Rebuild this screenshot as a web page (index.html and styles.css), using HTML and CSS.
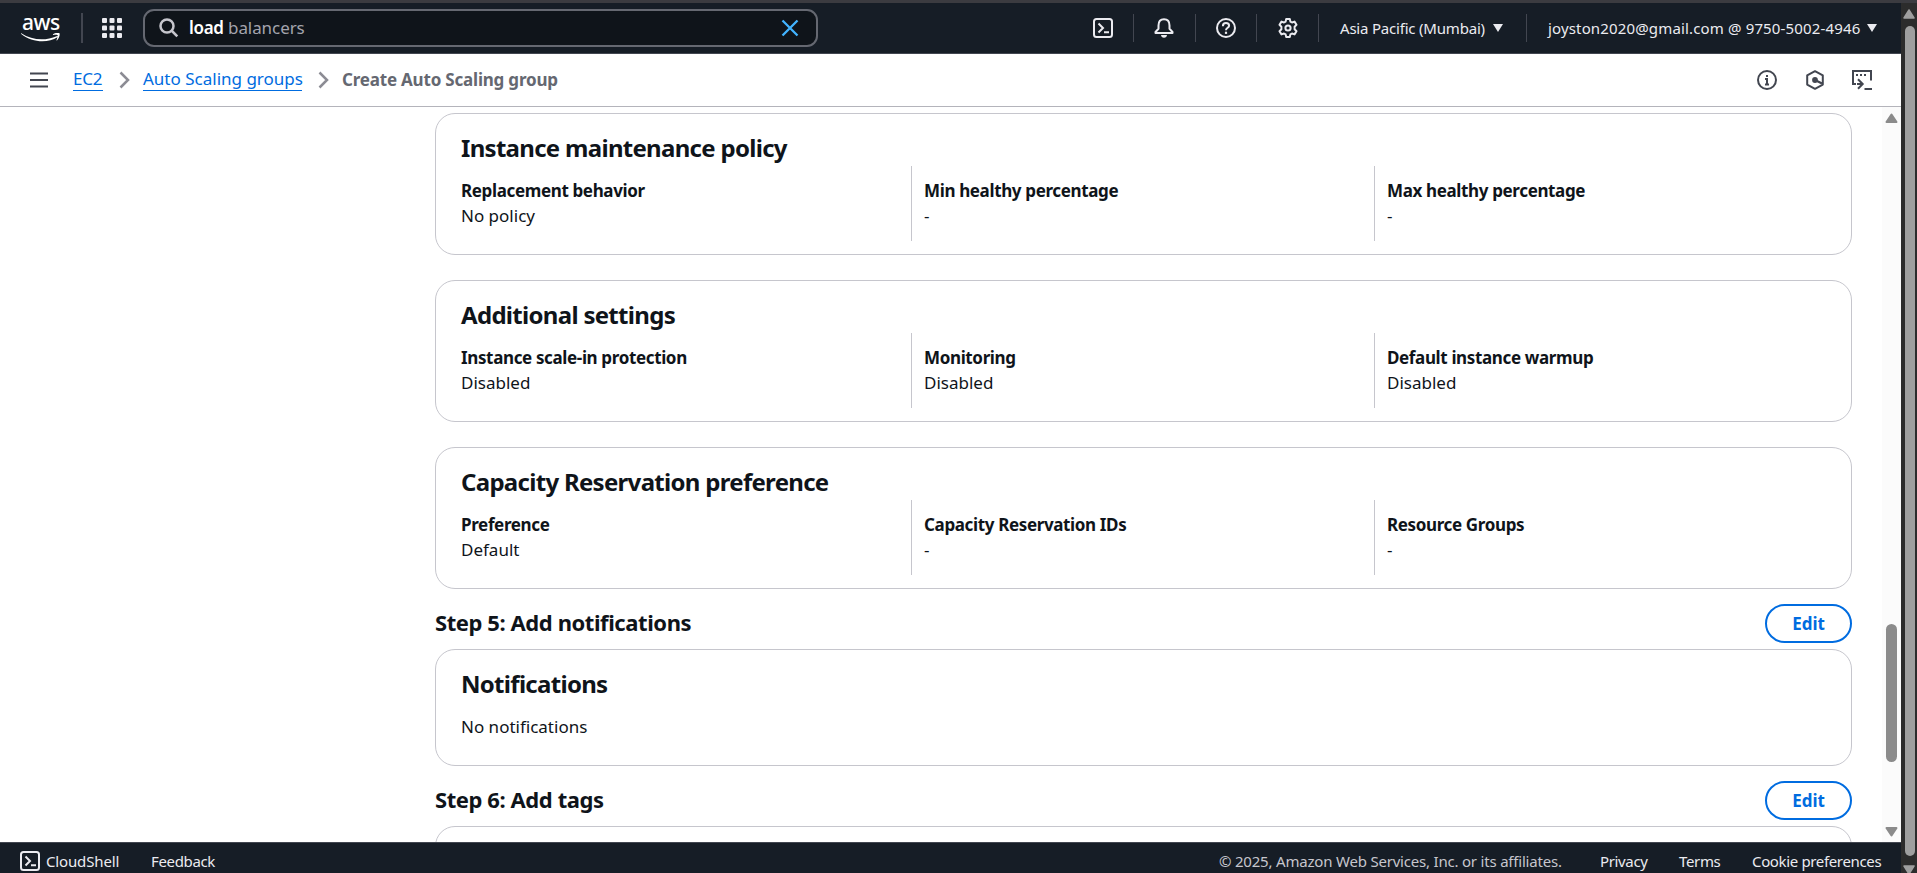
FILE: index.html
```
<!DOCTYPE html>
<html lang="en">
<head>
<meta charset="utf-8">
<title>Create Auto Scaling group | EC2</title>
<link rel="stylesheet" href="styles.css">
</head>
<body>
<div class="top-strip"></div>
<div class="window">
  <div class="app">
    <header class="nav">
      <a class="logo"><span class="logo-text">aws</span><svg width="40" height="11" viewBox="0 17 40 11"><path d="M0.3 17.3C11 24.600 25 25 35.600 20.200c.9-.4 1.600.5.8 1.100C27 27.300 11 26.800.2 18c-.4-.4-.2-.9.100-.7zM32 18.200c2-1.500 5.500-1.800 6.400-1 .8.900-.1 5-2.200 7-.5.400-.8.200-.6-.400.5-1.300 1.500-4 1-4.600-.6-.7-3.200-.4-4.300-.3-.4 0-.6-.4-.3-.7z" fill="#fff"/></svg></a>
      <span class="nav-rule"></span>
      <a class="apps"><svg width="20" height="20" fill="#ebebf0"><rect width="5" height="5" rx="1"/><rect x="7.500" width="5" height="5" rx="1"/><rect x="15" width="5" height="5" rx="1"/><rect y="7.500" width="5" height="5" rx="1"/><rect x="7.500" y="7.500" width="5" height="5" rx="1"/><rect x="15" y="7.500" width="5" height="5" rx="1"/><rect y="15" width="5" height="5" rx="1"/><rect x="7.500" y="15" width="5" height="5" rx="1"/><rect x="15" y="15" width="5" height="5" rx="1"/></svg></a>
      <div class="search">
        <svg width="20" height="20" fill="none" stroke="#c6c6cd" stroke-width="2.500"><circle cx="8" cy="8" r="6.500"/><path d="M12.500 12.500l5.800 5.800"/></svg>
        <span class="query"><b>load</b> balancers</span>
        <svg class="clear" width="18" height="18" fill="none" stroke="#42b4ff" stroke-width="2.300"><path d="M1.500 1.500l15 15M16.500 1.500l-15 15"/></svg>
      </div>
      <div class="tools">
        <a class="tool"><svg width="20" height="20" fill="none" stroke="#ebebf0" stroke-width="2"><rect x="1" y="1" width="18" height="18" rx="2.500"/><path d="M5.500 5.500L10 10l-4.500 4.500M11 14.200h5"/></svg></a>
        <a class="tool"><svg width="20" height="20" fill="none" stroke="#ebebf0" stroke-width="2" stroke-linejoin="round"><path d="M4.500 7.500C4.500 3.500 6.500 1.200 10 1.200s5.500 2.300 5.500 6.300v3.300l3 3.200v1h-17v-1l3-3.200z"/><path d="M7 17h6c0 1.500-1.300 2.800-3 2.800S7 18.500 7 17z" fill="#ebebf0" stroke="none"/></svg></a>
        <a class="tool"><svg width="20" height="20" fill="none" stroke="#ebebf0" stroke-width="2"><circle cx="10" cy="10" r="9"/><path d="M6.900 8.200C6.900 6 8.200 5 10 5s3.100 1 3.100 2.700c0 2.100-3.100 2-3.100 4.500"/><path d="M10 13.700v2.200" stroke-width="2.200"/></svg></a>
        <a class="tool"><svg width="20" height="20" fill="none" stroke="#ebebf0" stroke-width="2" stroke-linejoin="round"><path d="M8.200 1h3.600l.6 2.600 1.600.9 2.500-.9 2 3.200-1.900 1.900v2.600l1.900 1.900-2 3.200-2.500-.9-1.600.9-.6 2.600H8.200l-.6-2.600-1.600-.9-2.500.9-2-3.200 1.900-1.900V8.700L1.500 6.800l2-3.200 2.500.9 1.600-.9z"/><circle cx="10" cy="10" r="2.600"/></svg></a>
        <a class="region"><span class="region-name">Asia Pacific (Mumbai)</span><i class="caret"></i></a>
        <a class="account"><span class="account-name">joyston2020@gmail.com @ 9750-5002-4946</span><i class="caret"></i></a>
      </div>
    </header>

    <nav class="crumbs">
      <svg class="menu" width="18" height="16" stroke="#424650" stroke-width="2"><path d="M0 1.500h18M0 8h18M0 14.500h18"/></svg>
      <a class="crumb ec2">EC2</a>
      <svg class="chev" width="12" height="18" fill="none" stroke="#8c8c94" stroke-width="2.500"><path d="M1.500 1.500L9 9l-7.500 7.500"/></svg>
      <a class="crumb asg">Auto Scaling groups</a>
      <svg class="chev" width="12" height="18" fill="none" stroke="#8c8c94" stroke-width="2.500"><path d="M1.500 1.500L9 9l-7.500 7.500"/></svg>
      <span class="current">Create Auto Scaling group</span>
      <div class="panel-icons">
        <svg width="20" height="20" fill="none" stroke="#424650" stroke-width="2"><circle cx="10" cy="10" r="9"/><path d="M8 9h2v5.500M8 14.500h4M9 6h2"/></svg>
        <svg width="18" height="20" fill="none" stroke="#424650" stroke-width="2"><path d="M9 1.200l7.800 4.200v9.200L9 18.800l-7.800-4.200V5.400z" stroke-linejoin="round"/><circle cx="9" cy="10" r="2.900" fill="#424650" stroke="none"/><path d="M9 10l7 3.500" stroke-width="2.300"/></svg>
        <svg width="20" height="20" fill="none" stroke="#424650" stroke-width="2"><path d="M4 14H1V1h18v9.500M5 14h5.500M6 9.200l4.700 4.800L6 18.700M12.500 19H20"/><path d="M4 5h2M8 5h2M12 5h2"/></svg>
      </div>
    </nav>

    <div class="body">
      <main class="content">
        <section class="card">
          <h2>Instance maintenance policy</h2>
          <dl class="cols">
            <div><dt>Replacement behavior</dt><dd>No policy</dd></div>
            <div><dt>Min healthy percentage</dt><dd>-</dd></div>
            <div><dt>Max healthy percentage</dt><dd>-</dd></div>
          </dl>
        </section>
        <section class="card">
          <h2>Additional settings</h2>
          <dl class="cols">
            <div><dt>Instance scale-in protection</dt><dd>Disabled</dd></div>
            <div><dt>Monitoring</dt><dd>Disabled</dd></div>
            <div><dt>Default instance warmup</dt><dd>Disabled</dd></div>
          </dl>
        </section>
        <section class="card">
          <h2>Capacity Reservation preference</h2>
          <dl class="cols">
            <div><dt>Preference</dt><dd>Default</dd></div>
            <div><dt>Capacity Reservation IDs</dt><dd>-</dd></div>
            <div><dt>Resource Groups</dt><dd>-</dd></div>
          </dl>
        </section>
        <div class="step"><h3>Step 5: Add notifications</h3><button class="edit">Edit</button></div>
        <section class="card short">
          <h2>Notifications</h2>
          <p>No notifications</p>
        </section>
        <div class="step"><h3>Step 6: Add tags</h3><button class="edit">Edit</button></div>
        <section class="card last"></section>
      </main>
      <div class="scroll">
        <svg width="13" height="10" fill="#8b8b8b" stroke="#8b8b8b" stroke-width="2" stroke-linejoin="round"><path d="M6.500 1.500L11.500 9h-10z"/></svg>
        <i class="thumb"></i>
        <svg width="13" height="10" fill="#8b8b8b" stroke="#8b8b8b" stroke-width="2" stroke-linejoin="round"><path d="M6.500 8.500L11.500 1h-10z"/></svg>
      </div>
    </div>

    <footer class="foot">
      <svg width="20" height="20" fill="none" stroke="#ebebf0" stroke-width="2"><rect x="1" y="1" width="18" height="18" rx="2.500"/><path d="M5.500 5.500L10 10l-4.500 4.500M11 14.200h5"/></svg>
      <a class="shell">CloudShell</a>
      <a class="feedback">Feedback</a>
      <span class="copy">© 2025, Amazon Web Services, Inc. or its affiliates.</span>
      <a class="privacy">Privacy</a>
      <a class="terms">Terms</a>
      <a class="cookie">Cookie preferences</a>
    </footer>
  </div>
  <div class="outer-scroll">
    <svg width="12" height="10" fill="#9f9f9f" stroke="#9f9f9f" stroke-width="1.500" stroke-linejoin="round"><path d="M6 1L11 9H1z"/></svg>
    <i class="outer-thumb"></i>
    <svg width="12" height="10" fill="#9f9f9f" stroke="#9f9f9f" stroke-width="1.500" stroke-linejoin="round"><path d="M6 9L11 1H1z"/></svg>
  </div>
</div>
</body>
</html>
```
FILE: styles.css
```
* { box-sizing: border-box; margin: 0; padding: 0; }
html, body { height: 100%; overflow: hidden; }
body {
  font-family: "Noto Sans", "Open Sans", sans-serif;
  font-size: 17px;
  line-height: 25px;
  color: #0f141a;
  background: #fff;
  white-space: nowrap;
}
svg { display: block; flex: none; }
.top-strip { height: 3px; background: #3b3b40; }
.window { display: flex; height: 870px; }
.app { display: flex; flex-direction: column; width: 1901px; }

/* Global navigation */
.nav {
  display: flex;
  align-items: center;
  height: 51px;
  flex: none;
  background: #161d26;
  border-bottom: 1px solid #424650;
  color: #ebebf0;
}
.logo { display: flex; flex-direction: column; width: 60px; margin: -4px 0 0 21px; }
.logo-text {
  margin-bottom: -2px;
  padding-left: 1px;
  font: 500 21px/26px "Noto Sans", sans-serif;
  letter-spacing: -0.5px;
  color: #fff;
}
.nav-rule { width: 2px; height: 30px; background: #424650; }
.apps { margin: 0 21px 0 19px; }
.search {
  display: flex;
  align-items: center;
  width: 675px;
  height: 38px;
  padding: 0 17px 0 14px;
  border: 2px solid #656871;
  border-radius: 11px;
  background: #0f141a;
}
.query { margin: -2px 0 0 10px; color: #a4a4ad; letter-spacing: -0.08px; }
.query b { color: #fff; font-weight: 600; letter-spacing: -0.3px; }
.clear { margin-left: auto; }
.tools { display: flex; align-items: center; height: 28px; margin-left: auto; font-size: 15px; }
.tool {
  display: flex;
  align-items: center;
  justify-content: center;
  width: 61.700px;
  height: 28px;
  border-right: 1px solid #424650;
}
.region { display: flex; align-items: center; width: 208px; height: 28px; padding-left: 21px; border-right: 1px solid #424650; }
.region-name { width: 153px; letter-spacing: -0.2px; }
.account { display: flex; align-items: center; width: 374px; padding-left: 21px; }
.account-name { width: 319px; letter-spacing: 0.15px; }
.caret { border: 5px solid transparent; border-top: 8px solid #ebebf0; border-bottom: 0; }

/* Breadcrumb bar */
.crumbs {
  display: flex;
  align-items: center;
  height: 53px;
  flex: none;
  padding: 0 29px 0 30px;
  border-bottom: 1px solid #b4b4bb;
}
.crumb { color: #006ce0; height: 25px; line-height: 22px; position: relative; }
.crumb::after { content: ""; position: absolute; left: 0; right: 0; bottom: 2px; height: 1px; background: #006ce0; }
.ec2 { width: 30px; margin-left: 25px; letter-spacing: -0.2px; }
.asg { width: 159px; }
.chev { margin: 0 12px 0 16px; }
.current { margin-top: -2px; color: #656871; font-weight: 700; letter-spacing: -0.2px; }
.panel-icons { display: flex; gap: 29px; margin-left: auto; }
.panel-icons svg:not(:last-child) { margin: 0 -1px 0 1px; }

/* Review content */
.body { display: flex; flex: 1; min-height: 0; overflow: hidden; }
.content { width: 1417px; margin-left: 435px; padding-top: 6px; }
.card {
  height: 142px;
  margin-bottom: 25px;
  padding: 19px 25px 0;
  border: 1px solid #c6c6cd;
  border-radius: 20px;
}
h2 { font-size: 24px; line-height: 30px; font-weight: 700; letter-spacing: -0.7px; }
.cols { display: grid; grid-template-columns: repeat(3, 463px); height: 75px; margin: 3px -12px 0 -13px; }
.cols > div { padding: 12px 0 0 12px; border-left: 1px solid #c6c6cd; }
.cols > div:first-child { border-left-color: transparent; }
dt { font-weight: 700; letter-spacing: -0.36px; }
.step { display: flex; align-items: center; justify-content: space-between; height: 39px; margin: -10px 0 6px; }
h3 { margin-top: -3px; font-size: 22px; line-height: 28px; font-weight: 700; letter-spacing: -0.42px; }
.edit {
  width: 87px;
  height: 39px;
  border: 2px solid #006ce0;
  border-radius: 20px;
  background: #fff;
  color: #006ce0;
  font: 700 17px/25px "Noto Sans", sans-serif;
}
.short { height: 117px; }
.short p { margin-top: 15px; }

/* Scrollbars */
.scroll { display: flex; flex-direction: column; align-items: center; width: 19px; margin-left: auto; padding: 6px 0 5px; background: #fbfbfb; }
.thumb { width: 11px; height: 138px; margin: 501px 0 auto; border-radius: 6px; background: #8b8b8b; }
.outer-scroll { display: flex; flex-direction: column; align-items: center; width: 16px; padding-top: 6px; background: #2c2c2c; }
.outer-thumb { width: 10px; height: 830px; margin: 7px 0 9px 1px; border-radius: 5px; background: #9f9f9f; flex: none; }

/* Footer */
.foot {
  display: flex;
  align-items: flex-start;
  height: 31px;
  flex: none;
  padding: 8px 20px 0;
  background: #161d26;
  border-top: 1px solid #424650;
  color: #ebebf0;
  font-size: 15px;
  line-height: 20px;
  letter-spacing: -0.35px;
}
.shell { margin-left: 6px; width: 105px; letter-spacing: -0.15px; }
.copy { margin-left: auto; width: 381px; color: #c6c6cd; letter-spacing: -0.2px; }
.privacy { width: 79px; }
.terms { width: 73px; }
.cookie { width: 129px; }
```
